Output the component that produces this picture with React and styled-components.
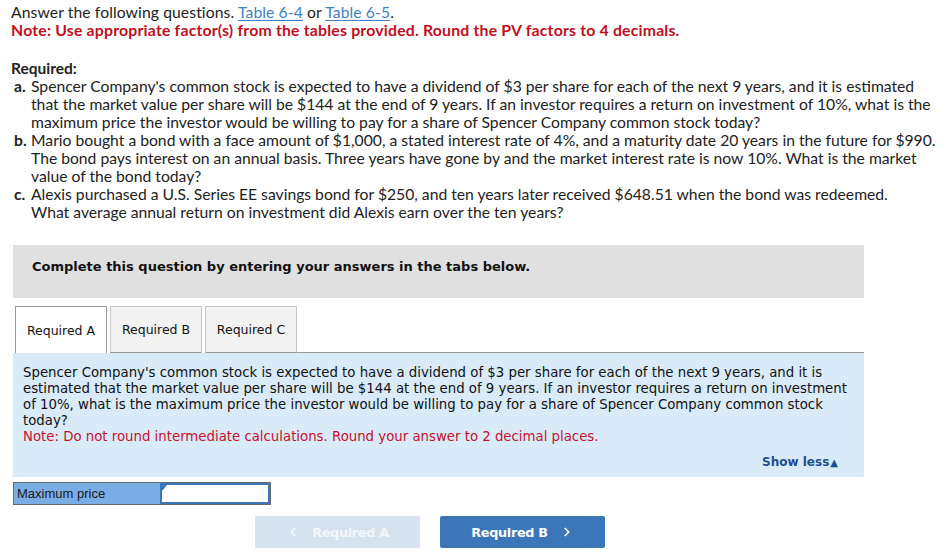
import React, { useState } from 'react'
import styled, { createGlobalStyle } from 'styled-components'
import { ChevronLeft, ChevronRight } from 'lucide-react'

const Global = createGlobalStyle`
  body {
    margin: 0;
    background: #fff;
  }
`

const tabs = ['Required A', 'Required B', 'Required C']

function App() {
  const [active, setActive] = useState(0)
  const [price, setPrice] = useState('')

  return (
    <>
      <Global />
      <Page>
        <Intro>
          Answer the following questions. <LinkText>Table 6-4</LinkText> or <LinkText>Table 6-5</LinkText>.
        </Intro>
        <RedNote>Note: Use appropriate factor(s) from the tables provided. Round the PV factors to 4 decimals.</RedNote>

        <ReqTitle>Required:</ReqTitle>
        <List>
          <Item>
            <Letter>a.</Letter>
            <ItemText $w={910}>Spencer Company's common stock is expected to have a dividend of $3 per share for each of the next 9 years, and it is estimated that the market value per share will be $144 at the end of 9 years. If an investor requires a return on investment of 10%, what is the maximum price the investor would be willing to pay for a share of Spencer Company common stock today?</ItemText>
          </Item>
          <Item>
            <Letter>b.</Letter>
            <ItemText $w={912}>Mario bought a bond with a face amount of $1,000, a stated interest rate of 4%, and a maturity date 20 years in the future for $990. The bond pays interest on an annual basis. Three years have gone by and the market interest rate is now 10%. What is the market value of the bond today?</ItemText>
          </Item>
          <Item>
            <Letter>c.</Letter>
            <ItemText $w={880}>Alexis purchased a U.S. Series EE savings bond for $250, and ten years later received $648.51 when the bond was redeemed. What average annual return on investment did Alexis earn over the ten years?</ItemText>
          </Item>
        </List>

        <Banner>Complete this question by entering your answers in the tabs below.</Banner>

        <TabRow>
          {tabs.map((t, i) => (
            <Tab key={t} $active={i === active} onClick={() => setActive(i)}>{t}</Tab>
          ))}
          <TabFill />
        </TabRow>

        <Panel>
          <PanelText>
            Spencer Company's common stock is expected to have a dividend of $3 per share for each of the next 9 years, and it is estimated that the market value per share will be $144 at the end of 9 years. If an investor requires a return on investment of 10%, what is the maximum price the investor would be willing to pay for a share of Spencer Company common stock today?
          </PanelText>
          <PanelNote>Note: Do not round intermediate calculations. Round your answer to 2 decimal places.</PanelNote>
          <ShowLess>Show less<Arrow>▲</Arrow></ShowLess>
        </Panel>

        <AnswerRow>
          <AnswerLabel>Maximum price</AnswerLabel>
          <AnswerCell>
            <Flag />
            <AnswerInput value={price} onChange={(e) => setPrice(e.target.value)} />
          </AnswerCell>
        </AnswerRow>

        <NavRow>
          <NavBtn $disabled>
            <ChevronLeft size={14} strokeWidth={3} /> Required A
          </NavBtn>
          <NavBtn>
            Required B <ChevronRight size={14} strokeWidth={3} />
          </NavBtn>
        </NavRow>
      </Page>
    </>
  )
}

export default App

const Page = styled.div`
  width: 950px;
  height: 557px;
  overflow: hidden;
  padding: 3px 0 0 0;
  box-sizing: border-box;
  font-family: Lato, "Liberation Sans", sans-serif;
  color: #222;
`

const Intro = styled.div`
  margin-left: 11px;
  font-size: 15.7px;
  line-height: 18px;
  letter-spacing: 0.1px;
`

const LinkText = styled.span`
  color: #3f7fc4;
  text-decoration: underline;
  text-underline-offset: 2px;
  cursor: pointer;
`

const RedNote = styled.div`
  margin-left: 11px;
  font-size: 15.8px;
  line-height: 18px;
  font-weight: 700;
  letter-spacing: 0.2px;
  color: #c00f1d;
`

const ReqTitle = styled.div`
  margin: 20px 0 0 11px;
  font-size: 15.5px;
  line-height: 18px;
  font-weight: 700;
`

const List = styled.div`
  margin-left: 14px;
`

const Item = styled.div`
  display: flex;
  font-size: 15.7px;
  line-height: 18px;
`

const Letter = styled.span`
  flex: 0 0 17px;
  font-weight: 700;
`

const ItemText = styled.span`
  width: ${(p) => p.$w}px;
`

const Banner = styled.div`
  margin: 24px 0 0 13px;
  width: 851px;
  height: 53px;
  box-sizing: border-box;
  background: #e0e0e0;
  padding: 14px 0 0 19px;
  font-family: "DejaVu Sans", Verdana, sans-serif;
  font-size: 13px;
  line-height: 16px;
  font-weight: 700;
  color: #111;
`

const TabRow = styled.div`
  display: flex;
  margin: 8px 0 0 13px;
  width: 851px;
  padding-left: 2px;
  box-sizing: border-box;
  gap: 3px;
  height: 47px;
`

const Tab = styled.div`
  width: 92px;
  box-sizing: border-box;
  display: flex;
  align-items: center;
  justify-content: center;
  font-family: "DejaVu Sans", Verdana, sans-serif;
  font-size: 12.5px;
  color: #111;
  cursor: pointer;
  background: ${(p) => (p.$active ? '#fff' : '#f2f2f2')};
  border: 1px solid ${(p) => (p.$active ? '#999' : '#c4c4c4')};
  border-bottom: ${(p) => (p.$active ? 'none' : '1px solid #999')};
`

const TabFill = styled.div`
  flex: 1;
  border-bottom: 1px solid #999;
  margin-left: -3px;
`

const Panel = styled.div`
  margin-left: 13px;
  width: 851px;
  box-sizing: border-box;
  background: #d9ebf9;
  padding: 12px 10px 6px 10px;
  font-family: "DejaVu Sans", Verdana, sans-serif;
  font-size: 13.3px;
  line-height: 16px;
  display: flex;
  flex-direction: column;
`

const PanelText = styled.div`
  color: #111;
`

const PanelNote = styled.div`
  color: #c8102e;
`

const ShowLess = styled.div`
  align-self: flex-end;
  margin: 9px 16px 0 0;
  font-size: 12px;
  font-weight: 700;
  color: #1d4f8f;
  cursor: pointer;
`

const Arrow = styled.span`
  font-size: 10px;
  margin-left: 1px;
`

const AnswerRow = styled.div`
  display: flex;
  margin: 5px 0 0 13px;
  width: 258px;
  height: 23px;
  box-sizing: border-box;
  border: 1px solid #6b6b6b;
  background: #7aade4;
`

const AnswerLabel = styled.div`
  width: 146px;
  flex: none;
  box-sizing: border-box;
  padding-left: 3px;
  display: flex;
  align-items: center;
  white-space: nowrap;
  font-family: "Liberation Sans", Arial, sans-serif;
  font-size: 13px;
  color: #1a1a1a;
`

const AnswerCell = styled.div`
  position: relative;
  width: 110px;
  flex: none;
  display: flex;
`

const AnswerInput = styled.input`
  width: 100%;
  min-width: 0;
  margin: 0;
  box-sizing: border-box;
  border: 2px solid #3a76b8;
  background: #fff;
  outline: none;
  font-family: "Liberation Sans", Arial, sans-serif;
  font-size: 13px;
  padding: 0 4px;
`

const Flag = styled.div`
  position: absolute;
  top: 2px;
  left: 2px;
  width: 0;
  height: 0;
  border-top: 6px solid #3a76b8;
  border-right: 5px solid transparent;
  z-index: 1;
`

const NavRow = styled.div`
  display: flex;
  gap: 20px;
  margin: 11px 0 0 255px;
`

const NavBtn = styled.button`
  width: 165px;
  height: 32px;
  border: none;
  border-radius: 2px;
  display: flex;
  align-items: center;
  justify-content: center;
  gap: 12px;
  font-family: "DejaVu Sans", Verdana, sans-serif;
  font-size: 12.8px;
  font-weight: 700;
  letter-spacing: -0.3px;
  color: ${(p) => (p.$disabled ? '#f4f7fb' : '#fff')};
  background: ${(p) => (p.$disabled ? '#d6e2f0' : '#3a76b8')};
  cursor: ${(p) => (p.$disabled ? 'default' : 'pointer')};
`
